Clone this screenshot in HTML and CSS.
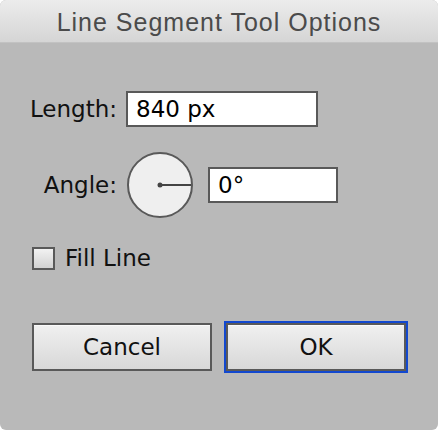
FILE: index.html
```html
<!DOCTYPE html>
<html>
<head>
<meta charset="utf-8">
<link rel="stylesheet" href="styles.css">
</head>
<body>
<div class="window">
  <div class="titlebar">Line Segment Tool Options</div>
  <div class="content">
    <div class="row row-length">
      <span class="label">Length:</span>
      <div class="field field-length">840 px</div>
    </div>
    <div class="row row-angle">
      <span class="label">Angle:</span>
      <div class="dial">
        <svg width="66" height="66" viewBox="0 0 66 66">
          <circle cx="33" cy="33" r="32" fill="#efefef" stroke="#595959" stroke-width="2"/>
          <line x1="33" y1="33" x2="64" y2="33" stroke="#444" stroke-width="2"/>
          <circle cx="33" cy="33" r="2.5" fill="#444"/>
        </svg>
      </div>
      <div class="field field-angle">0°</div>
    </div>
    <div class="row row-check">
      <span class="checkbox"></span>
      <span class="check-label">Fill Line</span>
    </div>
    <div class="row row-buttons">
      <div class="btn btn-cancel">Cancel</div>
      <div class="focus"><div class="btn btn-ok">OK</div></div>
    </div>
  </div>
</div>
</body>
</html>
```
FILE: styles.css
```css
html, body {
  margin: 0;
  padding: 0;
  background: #ffffff;
}
.window {
  width: 438px;
  height: 430px;
  background: #b9b9b9;
  border-radius: 6px;
  overflow: hidden;
  font-family: "DejaVu Sans", sans-serif;
  color: #111;
}
.titlebar {
  box-sizing: border-box;
  height: 43px;
  padding-top: 2px;
  border-bottom: 1px solid #c2c2c2;
  background: linear-gradient(#ececec, #d5d5d5);
  color: #4b4b4b;
  font-family: "Liberation Sans", "Noto Sans", sans-serif;
  font-size: 25px;
  letter-spacing: 1px;
  line-height: 40px;
  text-align: center;
}
.content {
  padding-top: 48px;
}
.row {
  display: flex;
  align-items: center;
}
.label {
  width: 117px;
  text-align: right;
  font-size: 23px;
  flex: none;
}
.field {
  box-sizing: border-box;
  height: 36px;
  border: 2px solid #595959;
  background: #ffffff;
  font-size: 23px;
  line-height: 32px;
  padding-left: 8px;
  color: #000;
}
.row-length .label {
  margin-right: 9px;
}
.field-length {
  width: 192px;
}
.row-angle {
  margin-top: 25px;
  height: 66px;
}
.row-angle .label {
  margin-right: 10px;
}
.dial {
  width: 66px;
  height: 66px;
  margin-right: 15px;
}
.dial svg {
  display: block;
}
.field-angle {
  width: 130px;
}
.row-check {
  margin-top: 27px;
  padding-left: 32px;
}
.checkbox {
  box-sizing: border-box;
  width: 23px;
  height: 23px;
  border: 2px solid #595959;
  background: linear-gradient(#f2f2f2, #d2d2d2);
  margin-right: 10px;
}
.check-label {
  font-size: 23px;
}
.row-buttons {
  margin-top: 50px;
  padding-left: 32px;
  align-items: flex-start;
}
.btn {
  box-sizing: border-box;
  border: 2px solid #595959;
  background: linear-gradient(#f0f0f0, #d8d8d8);
  box-shadow: inset 0 1px 0 #fafafa;
  font-size: 23px;
  text-align: center;
}
.btn-cancel {
  width: 180px;
  height: 48px;
  line-height: 44px;
  margin-top: 2px;
  margin-right: 12px;
}
.focus {
  box-sizing: border-box;
  width: 184px;
  height: 52px;
  border: 2px solid #1248cf;
}
.btn-ok {
  width: 180px;
  height: 48px;
  line-height: 44px;
}
```
